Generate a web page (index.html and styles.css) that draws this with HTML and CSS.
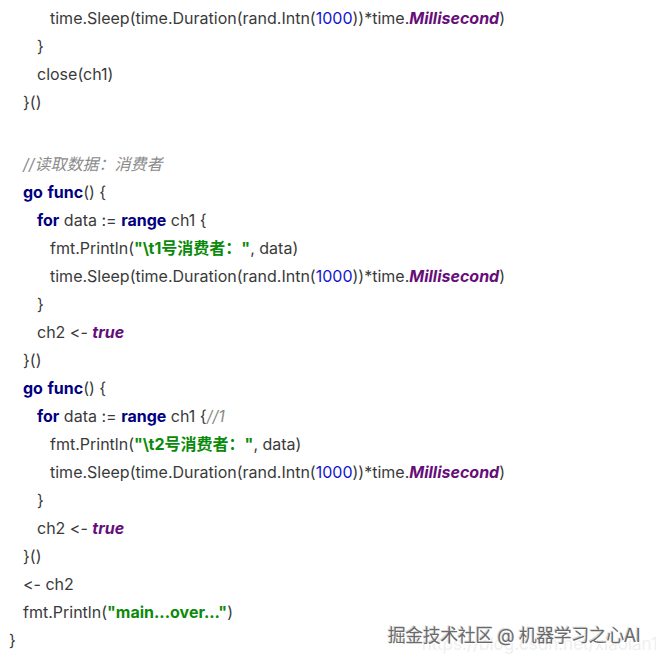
FILE: index.html
```html
<!DOCTYPE html>
<html>
<head>
<meta charset="utf-8">
<link rel="stylesheet" href="styles.css">
</head>
<body>
<div class="page">
  <div class="code">
    <div class="ln l3">time.Sleep(time.Duration(rand.Intn(<span class="num">1000</span>))*time.<span class="const">Millisecond</span>)</div>
    <div class="ln l2">}</div>
    <div class="ln l2">close(ch1)</div>
    <div class="ln l1">}()</div>
    <div class="blank"></div>
    <div class="ln l1"><span class="cmt">//读取数据：消费者</span></div>
    <div class="ln l1"><span class="kw">go</span> <span class="kw">func</span>() {</div>
    <div class="ln l2"><span class="kw">for</span> data := <span class="kw">range</span> ch1 {</div>
    <div class="ln l3">fmt.Println(<span class="str">"\t1号消费者："</span>, data)</div>
    <div class="ln l3">time.Sleep(time.Duration(rand.Intn(<span class="num">1000</span>))*time.<span class="const">Millisecond</span>)</div>
    <div class="ln l2">}</div>
    <div class="ln l2">ch2 &lt;- <span class="const">true</span></div>
    <div class="ln l1">}()</div>
    <div class="ln l1"><span class="kw">go</span> <span class="kw">func</span>() {</div>
    <div class="ln l2"><span class="kw">for</span> data := <span class="kw">range</span> ch1 {<span class="cmt">//1</span></div>
    <div class="ln l3">fmt.Println(<span class="str">"\t2号消费者："</span>, data)</div>
    <div class="ln l3">time.Sleep(time.Duration(rand.Intn(<span class="num">1000</span>))*time.<span class="const">Millisecond</span>)</div>
    <div class="ln l2">}</div>
    <div class="ln l2">ch2 &lt;- <span class="const">true</span></div>
    <div class="ln l1">}()</div>
    <div class="ln l1">&lt;- ch2</div>
    <div class="ln l1">fmt.Println(<span class="str">"main...over..."</span>)</div>
    <div class="ln l0">}</div>
  </div>
  <div class="mark">
    <span class="mark-sub">https://blog.csdn.net/xiaolan1234</span>
    <span class="mark-main">掘金技术社区 @ 机器学习之心AI</span>
  </div>
</div>
</body>
</html>
```
FILE: styles.css
```css
html, body {
  margin: 0;
  padding: 0;
  background: #ffffff;
}
.page {
  position: relative;
  width: 656px;
  height: 662px;
  overflow: hidden;
  font-family: Inter, "Noto Sans CJK SC", sans-serif;
  font-size: 16px;
  color: #3a3a3a;
  font-variant-ligatures: none;
  font-feature-settings: "calt" 0, "liga" 0;
}
.code {
  padding-top: 4px;
}
.ln {
  height: 28px;
  line-height: 28px;
  white-space: pre;
}
.blank { height: 34px; }
.l0 { padding-left: 9px; }
.l1 { padding-left: 23px; }
.l2 { padding-left: 37px; }
.l3 { padding-left: 50px; }
.kw { color: #000080; font-weight: 700; }
.num { color: #1515d0; }
.str { color: #0a8a0a; font-weight: 700; }
.const { color: #660e7a; font-weight: 700; font-style: italic; }
.cmt { color: #8a8a8a; font-style: italic; }
.mark {
  position: absolute;
  right: 16px;
  bottom: 15px;
}
.mark-main {
  position: relative;
  font-size: 18px;
  color: #6a6a6a;
  text-shadow: 1px 1px 0 #ffffff, -1px -1px 0 #d8d8d8;
  letter-spacing: -0.5px;
}
.mark-sub {
  position: absolute;
  left: 34px;
  top: 13px;
  font-size: 17px;
  color: #efefef;
  white-space: nowrap;
}
```
